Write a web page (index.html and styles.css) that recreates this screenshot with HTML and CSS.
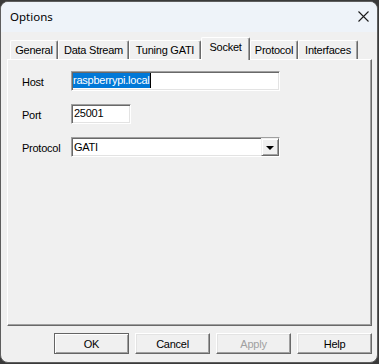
FILE: index.html
```html
<!DOCTYPE html>
<html lang="en">
<head>
  <meta charset="UTF-8">
  <title>Options</title>
  <link rel="stylesheet" href="styles.css">
</head>
<body>

  <div class="window">
    <div class="titlebar">
      <span class="title">Options</span>
      <svg class="close" width="11" height="11" viewBox="0 0 11 11">
        <path d="M0.5 0.5L10.5 10.5M10.5 0.5L0.5 10.5" stroke="#1b1b1b" stroke-width="1.1" fill="none"/>
      </svg>
    </div>

    <div class="content">
      <div class="tabs">
        <div class="tab tab-general">General</div>
        <div class="tab tab-stream">Data Stream</div>
        <div class="tab tab-tuning">Tuning GATI</div>
        <div class="tab tab-socket active">Socket</div>
        <div class="tab tab-protocol">Protocol</div>
        <div class="tab tab-interfaces">Interfaces</div>
      </div>

      <div class="panel">
        <div class="form">
          <span class="label">Host</span>
          <div class="edit edit-wide"><span class="sel">raspberrypi.local</span></div>

          <span class="label">Port</span>
          <div class="edit edit-port">25001</div>

          <span class="label">Protocol</span>
          <div class="edit edit-wide combo">
            <span class="combo-text">GATI</span>
            <span class="drop"><span class="arrow"></span></span>
          </div>
        </div>
      </div>

      <div class="buttons">
        <button class="btn default">OK</button>
        <button class="btn">Cancel</button>
        <button class="btn disabled">Apply</button>
        <button class="btn">Help</button>
      </div>
    </div>
  </div>

</body>
</html>
```

FILE: styles.css
```css
* {
  margin: 0;
  padding: 0;
  box-sizing: border-box;
}

body {
  background: #3a3a3a;
  height: 100vh;
  overflow: hidden;
  font-family: "Liberation Sans", Arial, sans-serif;
  font-size: 11px;
  letter-spacing: -0.25px;
  color: #000;
}

.window {
  width: 378px;
  height: 362px;
  margin-top: 1px;
  border: 1px solid #5e5e5e;
  border-radius: 8px;
  overflow: hidden;
  background: #f0f0f0;
  display: flex;
  flex-direction: column;
}

.titlebar {
  height: 30px;
  flex: none;
  background: #eef3f9;
  display: flex;
  align-items: center;
  justify-content: space-between;
  padding: 0 8px 2px 9px;
}

.title {
  font-family: "Noto Sans", sans-serif;
  font-size: 11.5px;
  letter-spacing: 0;
  color: #000;
}

.close {
  display: block;
}

.content {
  flex: 1;
  padding: 5px 5px 0 6px;
  display: flex;
  flex-direction: column;
}

/* tabs */
.tabs {
  height: 22px;
  display: flex;
  align-items: flex-end;
  padding-left: 3px;
}

.tab {
  height: 19px;
  line-height: 19px;
  text-align: center;
  background: #f0f0f0;
  border-top: 1px solid #fff;
  border-left: 1px solid #fff;
  border-right: 1px solid #696969;
  box-shadow: inset -1px 0 0 #a0a0a0;
  border-radius: 2px 2px 0 0;
  white-space: nowrap;
}

.tab-general { width: 48px; }
.tab-stream { width: 71px; }
.tab-tuning { width: 72px; }
.tab-socket { width: 49px; }
.tab-protocol { width: 48px; }
.tab-interfaces { width: 60px; }

.tab.active {
  height: 23px;
  line-height: 19px;
  padding-bottom: 3px;
  margin-bottom: -1px;
  position: relative;
  z-index: 1;
}

/* page */
.panel {
  height: 267px;
  flex: none;
  border: 1px solid;
  border-color: #fff #696969 #696969 #fff;
  box-shadow: inset -1px -1px 0 #a0a0a0;
}

.form {
  display: grid;
  grid-template-columns: 49px auto;
  justify-items: start;
  align-items: center;
  row-gap: 13px;
  padding: 11px 0 0 14px;
}

.label {
  padding-top: 1px;
}

.edit {
  height: 20px;
  background: #fff;
  border: 1px solid;
  border-color: #a0a0a0 #fff #fff #a0a0a0;
  box-shadow: inset 1px 1px 0 #696969, inset -1px -1px 0 #e3e3e3;
  padding: 1px 0 0 1px;
  line-height: 15px;
  white-space: nowrap;
}

.edit-wide { width: 209px; }
.edit-port { width: 60px; padding-left: 2px; }

.sel {
  display: inline-block;
  height: 15px;
  background: #0078d7;
  color: #fff;
  padding-right: 1px;
  border-right: 1px solid #000;
}

.combo {
  display: flex;
  align-items: center;
  justify-content: space-between;
  padding: 0;
}

.combo-text {
  padding-left: 2px;
}

.drop {
  width: 18px;
  height: 18px;
  background: #f0f0f0;
  border: 1px solid;
  border-color: #f0f0f0 #696969 #696969 #f0f0f0;
  box-shadow: inset 1px 1px 0 #fff, inset -1px -1px 0 #a0a0a0;
  display: flex;
  align-items: center;
  justify-content: center;
}

.arrow {
  width: 0;
  height: 0;
  border-left: 4px solid transparent;
  border-right: 4px solid transparent;
  border-top: 4px solid #000;
  margin-top: 1px;
}

/* buttons */
.buttons {
  display: flex;
  justify-content: flex-end;
  gap: 6px;
  margin-top: 7px;
}

.btn {
  width: 75px;
  height: 21px;
  font-family: "Liberation Sans", Arial, sans-serif;
  font-size: 11px;
  letter-spacing: -0.25px;
  color: #000;
  background: #f0f0f0;
  border: 1px solid;
  border-color: #fff #696969 #696969 #fff;
  box-shadow: inset -1px -1px 0 #a0a0a0, inset 1px 1px 0 #e3e3e3;
}

.btn.default {
  border-color: #646464;
  box-shadow: inset 1px 1px 0 #fff, inset -1px -1px 0 #a0a0a0;
}

.btn.disabled {
  color: #a0a0a0;
}
```
